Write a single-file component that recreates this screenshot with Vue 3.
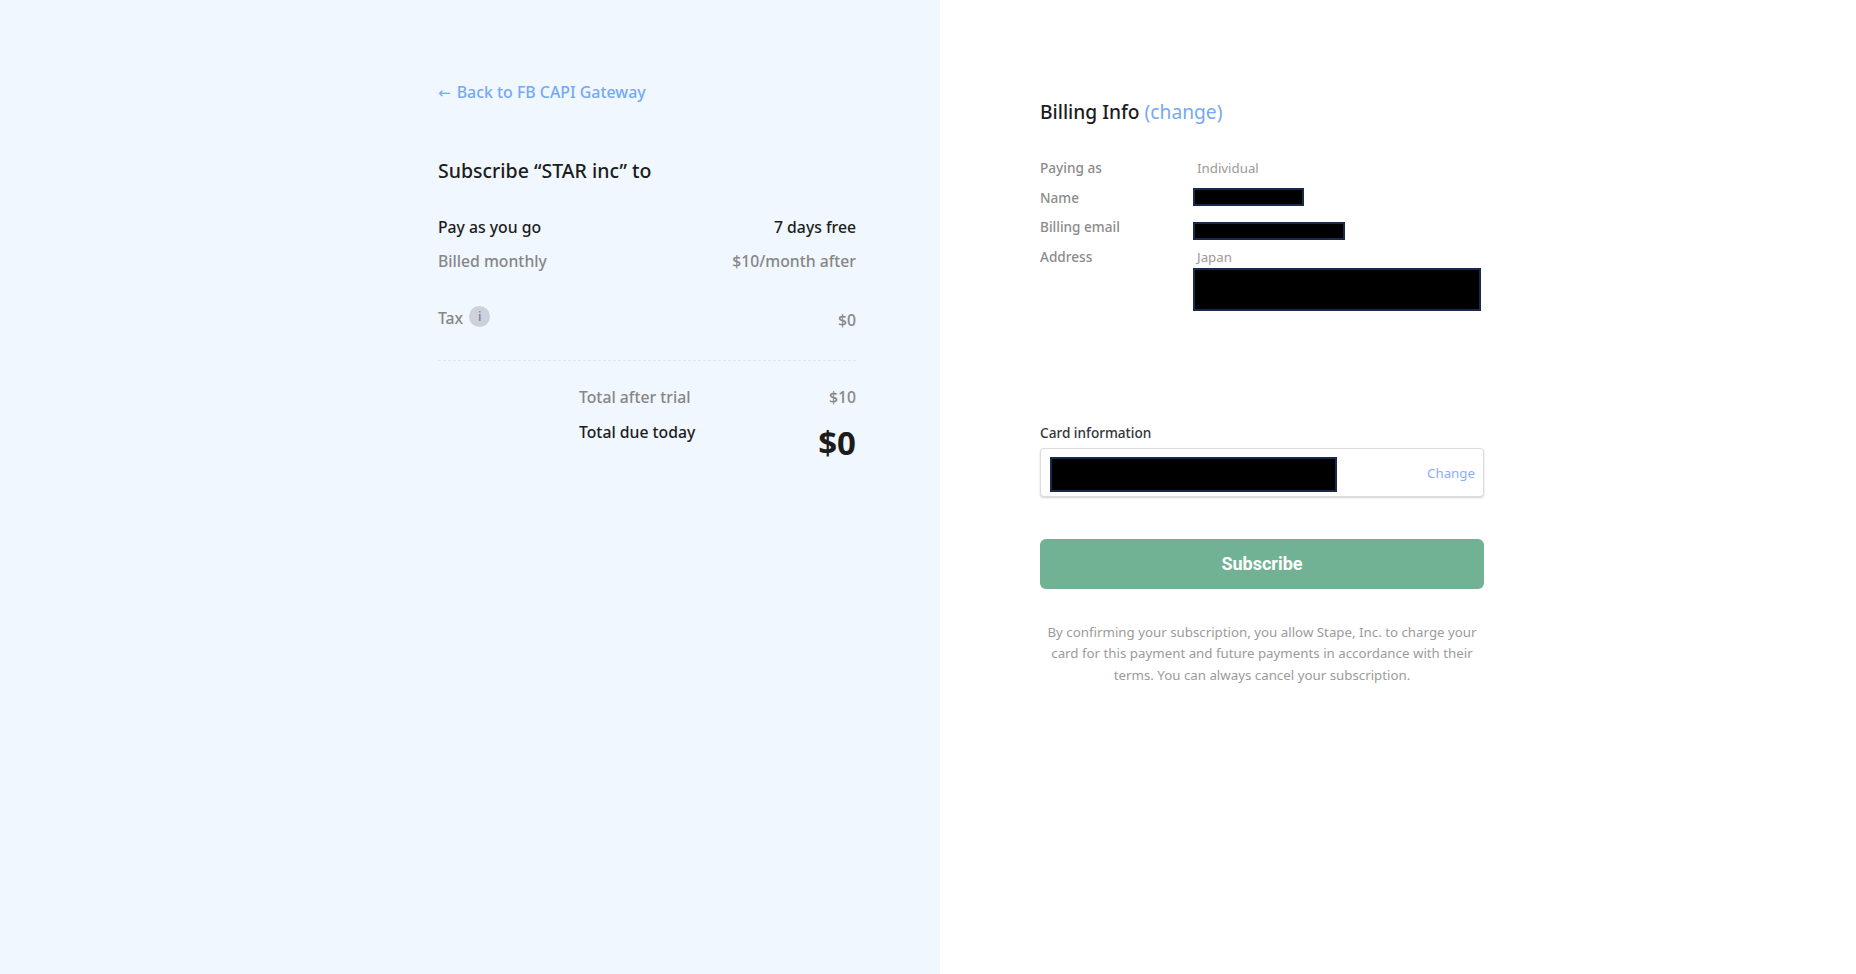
<script setup>
const billing = [
  { label: 'Paying as', value: 'Individual' },
  { label: 'Name', mask: 'mask-name' },
  { label: 'Billing email', mask: 'mask-email' },
  { label: 'Address', value: 'Japan', mask: 'mask-address' },
]
</script>

<template>
  <div class="page">
    <section class="summary">
      <div class="summary-inner">
        <a class="back"><span class="arrow">←</span> Back to FB CAPI Gateway</a>
        <h2 class="title">Subscribe “STAR inc” to</h2>
        <div class="row dark plan"><span>Pay as you go</span><span>7 days free</span></div>
        <div class="row grey billed"><span>Billed monthly</span><span>$10/month after</span></div>
        <div class="row grey tax">
          <span class="tax-label">Tax <i class="info">i</i></span>
          <span class="tax-value">$0</span>
        </div>
        <div class="totals">
          <div class="row grey"><span>Total after trial</span><span>$10</span></div>
          <div class="row dark due"><span>Total due today</span><strong>$0</strong></div>
        </div>
      </div>
    </section>
    <section class="checkout">
      <div class="checkout-inner">
        <h2 class="billing-title">Billing Info <a>(change)</a></h2>
        <dl class="billing">
          <div v-for="item in billing" :key="item.label" class="billing-row">
            <dt>{{ item.label }}</dt>
            <dd>
              <span v-if="item.value" class="value">{{ item.value }}</span>
              <div v-if="item.mask" class="mask" :class="item.mask"></div>
            </dd>
          </div>
        </dl>
        <div class="card-label">Card information</div>
        <div class="card-box">
          <div class="mask mask-card"></div>
          <a class="card-change">Change</a>
        </div>
        <button class="subscribe">Subscribe</button>
        <p class="terms">By confirming your subscription, you allow Stape, Inc. to charge your card for this payment and future payments in accordance with their terms. You can always cancel your subscription.</p>
      </div>
    </section>
  </div>
</template>

<style>
html, body { margin: 0; background: #fff; }
</style>

<style scoped>
.page {
  display: flex;
  height: 974px;
  overflow: hidden;
  font-family: "Noto Sans", "Open Sans", sans-serif;
}
.summary {
  width: 940px;
  background: #f0f7fe;
  display: flex;
  justify-content: flex-end;
  padding-right: 84px;
  box-sizing: border-box;
}
.summary-inner {
  width: 418px;
  padding-top: 81px;
}
.back {
  display: block;
  font-size: 15.9px;
  line-height: 22px;
  font-weight: 500;
  color: #75a8f5;
}
.arrow {
  font-family: "DejaVu Sans", sans-serif;
  font-size: 15px;
  font-weight: 400;
  margin-right: 2px;
}
.title {
  margin: 54px 0 0;
  font-size: 19.5px;
  line-height: 26px;
  font-weight: 500;
  color: #1c1c1c;
}
.row {
  display: flex;
  justify-content: space-between;
  font-size: 15.75px;
  line-height: 22px;
  font-weight: 500;
}
.dark { color: #1c1c1c; }
.grey { color: #868686; }
.plan { margin-top: 32px; }
.billed { margin-top: 12px; }
.tax {
  margin-top: 33px;
  padding-bottom: 29px;
  border-bottom: 1px dashed #e2e6ea;
}
.tax-label {
  display: flex;
  align-items: center;
  gap: 6px;
}
.tax-value { margin-top: 4px; }
.info {
  width: 21px;
  height: 21px;
  border-radius: 50%;
  background: #cdd1d9;
  color: #7b7f87;
  font-size: 13px;
  line-height: 20px;
  font-style: normal;
  text-align: center;
  margin-top: -3px;
}
.totals {
  margin-left: 141px;
  margin-top: 25px;
}
.due { margin-top: 13px; }
.due strong {
  font-size: 33px;
  line-height: 40px;
  font-weight: 700;
  margin-top: 2px;
}
.checkout {
  flex: 1;
  padding-left: 100px;
}
.checkout-inner {
  width: 444px;
  padding-top: 99px;
}
.billing-title {
  margin: 0;
  font-size: 19.2px;
  line-height: 26px;
  font-weight: 500;
  color: #1c1c1c;
}
.billing-title a { color: #75a8f5; font-weight: 400; }
.billing {
  margin: 33px 0 0;
  height: 265px;
  font-size: 14px;
  line-height: 20px;
}
.billing-row {
  display: flex;
  min-height: 29.5px;
}
.billing dt {
  width: 153px;
  font-size: 13.6px;
  font-weight: 500;
  color: #8b8b8b;
}
.billing dd { margin: 0; }
.value {
  display: block;
  padding-left: 4px;
  font-size: 13.3px;
  color: #9a9a9a;
}
.mask {
  background: #000;
  border: 2px solid #182a4c;
  box-sizing: border-box;
}
.mask-name { width: 111px; height: 18px; }
.mask-email { width: 152px; height: 18px; margin-top: 5px; }
.mask-address { width: 288px; height: 43px; margin-top: 1px; }
.card-label {
  font-size: 13.6px;
  line-height: 20px;
  font-weight: 500;
  color: #30343a;
}
.card-box {
  margin-top: 5px;
  height: 49px;
  display: flex;
  align-items: center;
  justify-content: space-between;
  padding: 0 8px 0 9px;
  box-sizing: border-box;
  background: #fff;
  border: 1px solid #dcdcdc;
  border-radius: 4px;
  box-shadow: 0 1px 2px rgba(0, 0, 0, 0.18);
}
.mask-card { width: 287px; height: 35px; margin-top: 4px; }
.card-change {
  font-size: 13.3px;
  color: #8aaef5;
}
.subscribe {
  display: block;
  width: 100%;
  height: 50px;
  margin-top: 42px;
  padding: 0 0 2px;
  border: 0;
  border-radius: 6px;
  background: #70b293;
  color: #fff;
  font-family: Roboto, sans-serif;
  font-size: 18px;
  font-weight: 700;
}
.terms {
  margin: 33px 0 0;
  font-size: 13.3px;
  line-height: 21.4px;
  text-align: center;
  color: #9b9b9b;
}
</style>
